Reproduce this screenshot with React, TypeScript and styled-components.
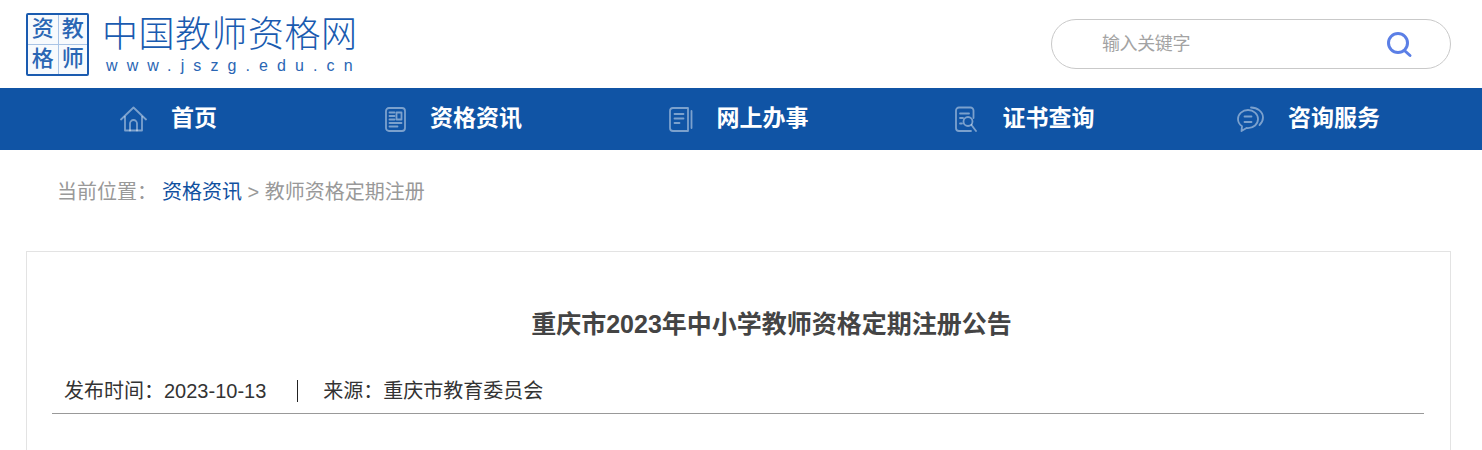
import React from "react";
import styled, { createGlobalStyle } from "styled-components";

const GlobalStyle = createGlobalStyle`
  html, body {
    margin: 0;
    padding: 0;
    background: #fff;
    overflow: hidden;
  }
  body {
    font-family: "Liberation Sans", "Noto Sans CJK SC", sans-serif;
  }
`;

const Header = styled.header`
  height: 88px;
  padding: 0 31px 0 26px;
  display: flex;
  align-items: center;
  justify-content: space-between;
`;

const Logo = styled.div`
  display: flex;
  align-items: center;
  gap: 13px;
`;

const Seal = styled.div`
  width: 63px;
  height: 63px;
  box-sizing: border-box;
  border: 2px solid #1a5bb0;
  border-radius: 2px;
  display: grid;
  grid-template-columns: 1fr 1fr;
  grid-template-rows: 1fr 1fr;
  background: #f7fafd;
`;

const SealCell = styled.span<{ $right?: boolean; $bottom?: boolean }>`
  display: flex;
  align-items: center;
  justify-content: center;
  font-size: 22px;
  font-weight: 500;
  line-height: 1;
  color: #2a66b4;
  border-left: ${(p) => (p.$right ? "1px solid #a9c4e6" : "none")};
  border-top: ${(p) => (p.$bottom ? "1px solid #a9c4e6" : "none")};
`;

const LogoText = styled.div`
  display: flex;
  flex-direction: column;
  width: 256px;
`;

const LogoName = styled.div`
  font-size: 36px;
  line-height: 42px;
  font-weight: 300;
  color: #1a5bb0;
  white-space: nowrap;
  letter-spacing: 0.5px;
`;

const LogoUrl = styled.div`
  margin-top: 1px;
  padding-left: 4px;
  font-size: 16px;
  line-height: 18px;
  color: #2a66b4;
  letter-spacing: 9.1px;
  white-space: nowrap;
`;

const Search = styled.div`
  width: 400px;
  height: 50px;
  box-sizing: border-box;
  margin-top: -1px;
  border: 1px solid #c9c9c9;
  border-radius: 25px;
  padding: 0 37px 0 50px;
  display: flex;
  align-items: center;
  justify-content: space-between;
`;

const SearchHint = styled.span`
  font-size: 18px;
  letter-spacing: -0.4px;
  color: #a3a3a3;
  margin-top: -3px;
`;

const SearchIcon = styled.svg`
  width: 27px;
  height: 27px;
  margin-top: 2px;
`;

const Nav = styled.nav`
  height: 62px;
  padding: 0 31px 0 26px;
  background: #1054a5;
  display: grid;
  grid-template-columns: repeat(5, 1fr);
`;

const NavItem = styled.a`
  display: flex;
  align-items: center;
  justify-content: center;
  gap: 24px;
  color: #fff;
  font-size: 23px;
  font-weight: 700;
  text-decoration: none;
`;

const NavLabel = styled.span`
  margin-bottom: 6px;
`;

const NavIcon = styled.svg`
  height: 26px;
  fill: none;
  stroke: rgba(255, 255, 255, 0.45);
  stroke-width: 1.8;
  stroke-linecap: round;
  stroke-linejoin: round;
  flex: none;
`;

const Crumbs = styled.div`
  height: 83px;
  padding: 28px 0 0 57px;
  box-sizing: border-box;
  font-size: 20px;
  line-height: 28px;
  color: #999;
`;

const CrumbLabel = styled.span`
  margin-right: 5px;
`;

const CrumbLink = styled.a`
  color: #10509f;
  text-decoration: none;
`;

const Card = styled.section`
  margin: 18px 31px 0 26px;
  min-height: 300px;
  border: 1px solid #e3e3e3;
  padding: 0 26px 0 25px;
`;

const Title = styled.h1`
  margin: 55px 0 0;
  padding-left: 67px;
  font-size: 25px;
  line-height: 34px;
  font-weight: 700;
  color: #444;
  text-align: center;
`;

const Meta = styled.div`
  margin-top: 36px;
  height: 37px;
  padding-left: 12px;
  box-sizing: border-box;
  border-bottom: 1px solid #999;
  display: flex;
  align-items: flex-start;
  font-size: 20px;
  line-height: 28px;
  color: #333;
`;

const MetaDate = styled.span`
  padding-right: 31px;
  border-right: 1px solid #222;
  height: 22px;
  line-height: 22px;
  margin-top: 3px;
`;

const MetaSource = styled.span`
  padding-left: 25px;
  height: 22px;
  line-height: 22px;
  margin-top: 3px;
`;

const App = () => {
  return (
    <>
      <GlobalStyle />
      <Header>
        <Logo>
          <Seal>
            <SealCell>资</SealCell>
            <SealCell $right>教</SealCell>
            <SealCell $bottom>格</SealCell>
            <SealCell $right $bottom>师</SealCell>
          </Seal>
          <LogoText>
            <LogoName>中国教师资格网</LogoName>
            <LogoUrl>www.jszg.edu.cn</LogoUrl>
          </LogoText>
        </Logo>
        <Search>
          <SearchHint>输入关键字</SearchHint>
          <SearchIcon viewBox="0 0 27 27" fill="none" stroke="#5b7fe6" strokeWidth="3" strokeLinecap="round">
            <circle cx="12" cy="12" r="9.500" />
            <path d="M19 20l5 4.500" />
          </SearchIcon>
        </Search>
      </Header>
      <Nav>
        <NavItem>
          <NavIcon viewBox="0 0 27 26" width="27">
            <path d="M1 13.500 13.500 1.500 26 13.500" />
            <path d="M5 11v13.500h17V11" />
            <path d="M10 24.500v-7a3.500 3.500 0 0 1 7 0v7" />
          </NavIcon>
          <NavLabel>首页</NavLabel>
        </NavItem>
        <NavItem>
          <NavIcon viewBox="0 0 21 26" width="21">
            <rect x="1" y="2" width="19" height="23" rx="3" />
            <path d="M4.500 6.500h5M4.500 10h5M4.500 13.500h5M4.500 17h12M4.500 20.500h8" />
            <rect x="11.500" y="6.500" width="5" height="7" />
          </NavIcon>
          <NavLabel>资格资讯</NavLabel>
        </NavItem>
        <NavItem>
          <NavIcon viewBox="0 0 24 26" width="24">
            <path d="M19 2H4a3 3 0 0 0-3 3v17a3 3 0 0 0 3 3h15z" />
            <path d="M5.500 8h9M5.500 12.500h9M5.500 17h5" />
            <path d="M22.500 5v17" />
          </NavIcon>
          <NavLabel>网上办事</NavLabel>
        </NavItem>
        <NavItem>
          <NavIcon viewBox="-2 0 26 26" width="26">
            <path d="M18.500 12V4.500a3 3 0 0 0-3-3H4a3 3 0 0 0-3 3V22a3 3 0 0 0 3 3h12" />
            <path d="M5 7.500h9M5 12h3" />
            <circle cx="13" cy="15.500" r="4.500" />
            <path d="M16.500 19l4.500 6M5 17.500h2" />
          </NavIcon>
          <NavLabel>证书查询</NavLabel>
        </NavItem>
        <NavItem>
          <NavIcon viewBox="0 0 27 26" width="27">
            <path d="M11 4C5.500 4 1 8 1 13c0 3 1.600 5.600 4 7.200L4.500 25l5-3c.5.100 1 .100 1.500.100 5.500 0 10-4 10-9.100S16.500 4 11 4z" />
            <path d="M14 1.500c6.500 0 12 4.300 12 10 0 3-1.500 5.500-3.500 7.500" />
            <path d="M7.500 10.500h7M7.500 16h7" />
          </NavIcon>
          <NavLabel>咨询服务</NavLabel>
        </NavItem>
      </Nav>
      <Crumbs>
        <CrumbLabel>当前位置：</CrumbLabel>
        <CrumbLink>资格资讯</CrumbLink> &gt; 教师资格定期注册
      </Crumbs>
      <Card>
        <Title>重庆市2023年中小学教师资格定期注册公告</Title>
        <Meta>
          <MetaDate>发布时间：2023-10-13</MetaDate>
          <MetaSource>来源：重庆市教育委员会</MetaSource>
        </Meta>
      </Card>
    </>
  );
};

export default App;
